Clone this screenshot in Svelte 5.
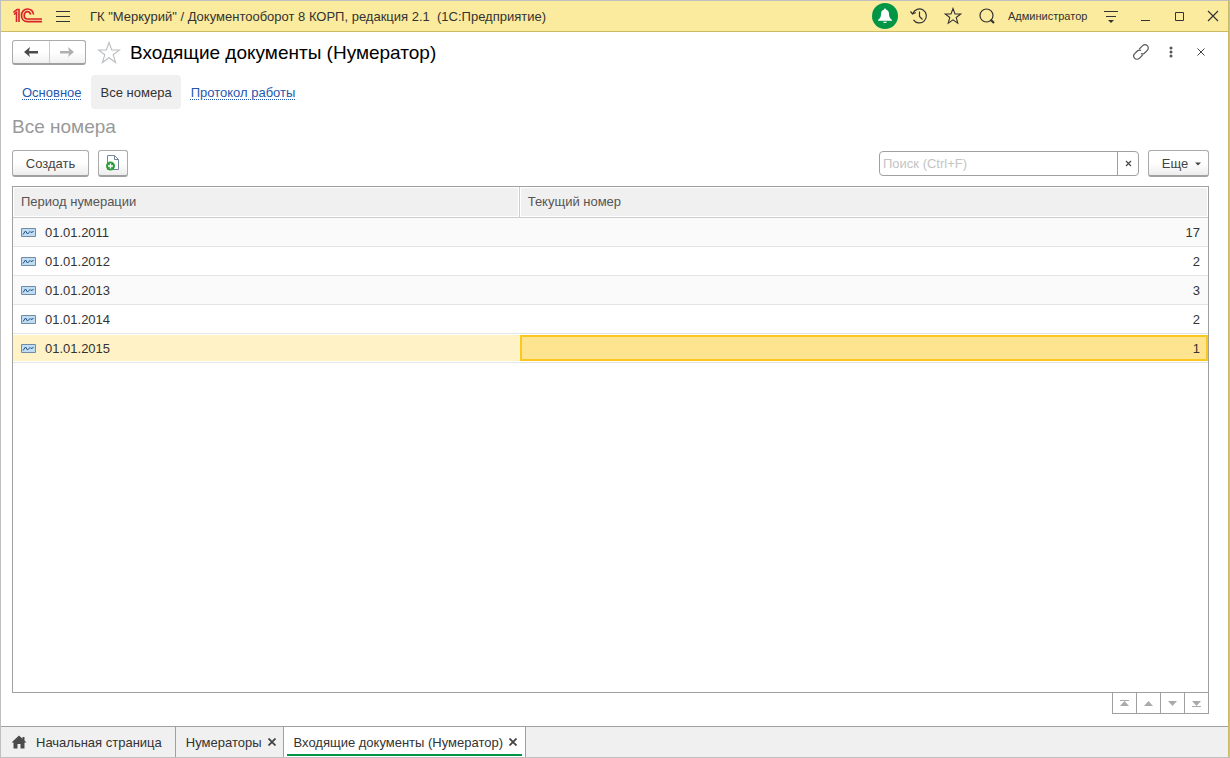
<script>
    let rows = $state([
        { period: '01.01.2011', number: 17 },
        { period: '01.01.2012', number: 2 },
        { period: '01.01.2013', number: 3 },
        { period: '01.01.2014', number: 2 },
        { period: '01.01.2015', number: 1 }
    ]);
    let selected = $state(4);
    let search = $state('');

    const pager = [
        { label: 'В начало', path: 'M1 1h9v1H1zM5.5 2L10 7H1z' },
        { label: 'Вверх', path: 'M5.5 2L10 7H1z' },
        { label: 'Вниз', path: 'M1 2h9L5.5 7z' },
        { label: 'В конец', path: 'M1 2h9L5.5 7zM1 7h9v1H1z' }
    ];
</script>

<div class="window">
    <header class="titlebar">
        <svg class="logo" width="30" height="16" viewBox="0 0 30 16" fill="none" stroke="#d8232a">
            <path d="M0.5 4.5L4 1.5H6V14M1 6.5L3.5 4.5V14" stroke-width="1.6" />
            <path d="M20.5 6.5C20 3 17.5 1 14.5 1C11 1 8.5 4 8.5 7.5C8.5 11 11 13.7 14.5 13.7H29" stroke-width="1.7" />
            <path d="M17.7 6.5C17 4.5 16 3.7 14.5 3.7C12.5 3.7 11.2 5.5 11.2 7.5C11.2 9.5 12.5 11 14.5 11H29" stroke-width="1.7" />
        </svg>
        <button class="icon menu" aria-label="Меню">
            <svg width="14" height="13" viewBox="0 0 14 13" stroke="#333"><path d="M0 1.5h14M0 6.5h14M0 11.5h14" /></svg>
        </button>
        <span class="app-name">ГК "Меркурий" / Документооборот 8 КОРП, редакция 2.1&nbsp; (1С:Предприятие)</span>
        <div class="tools">
            <button class="icon bell" aria-label="Уведомления">
                <svg width="16" height="16" viewBox="0 0 16 16" fill="#fff">
                    <path d="M8 0.5C8.8 0.5 9 1 9 1.6C11.2 2.2 12 4 12 6C12 9 13 10.5 15 12V12.8H1V12C3 10.5 4 9 4 6C4 4 4.8 2.2 7 1.6C7 1 7.2 0.5 8 0.5zM6 13.8h4C9.6 15.5 6.4 15.5 6 13.8z" />
                </svg>
            </button>
            <button class="icon" aria-label="История">
                <svg width="18" height="18" viewBox="0 0 18 18" fill="none" stroke="#333" stroke-width="1.2">
                    <path d="M2.8 6.5A7 7 0 1 1 3.5 12.8M9.5 4.5V9.5L12.5 12.5" />
                    <path d="M0.5 4.5L2.6 7L5.8 5.5" />
                </svg>
            </button>
            <button class="icon" aria-label="Избранное">
                <svg width="18" height="18" viewBox="0 0 18 18" fill="none" stroke="#333" stroke-width="1.1">
                    <path d="M9 1.5L11 7H16.7L12.2 10.5L13.8 16.2L9 12.9L4.2 16.2L5.8 10.5L1.3 7H7z" />
                </svg>
            </button>
            <button class="icon" aria-label="Поиск">
                <svg width="18" height="18" viewBox="0 0 18 18" fill="none" stroke="#333">
                    <circle cx="8.5" cy="8.5" r="6.5" stroke-width="1.2" />
                    <path d="M12.5 12.5L16 16" stroke-width="2.2" />
                </svg>
            </button>
            <a class="user" href="#user">Администратор</a>
            <button class="icon" aria-label="Настройки">
                <svg width="14" height="14" viewBox="0 0 14 14" stroke="#333">
                    <path d="M0 2.5h14M2 7.5h10" /><path d="M4 11h6L7 14z" fill="#333" stroke="none" />
                </svg>
            </button>
            <button class="icon" aria-label="Свернуть">
                <svg width="12" height="12" viewBox="0 0 12 12" stroke="#333"><path d="M2 10.5h9" /></svg>
            </button>
            <button class="icon" aria-label="Развернуть">
                <svg width="12" height="12" viewBox="0 0 12 12" fill="none" stroke="#333"><path d="M2.5 2.5h8v8h-8z" /></svg>
            </button>
            <button class="icon" aria-label="Закрыть">
                <svg width="12" height="12" viewBox="0 0 12 12" stroke="#333" stroke-width="1.2"><path d="M1 1L11 11M11 1L1 11" /></svg>
            </button>
        </div>
    </header>

    <main>
        <div class="heading">
            <div class="history">
                <button aria-label="Назад">
                    <svg width="16" height="12" viewBox="0 0 16 12" fill="#4a4a4a"><path d="M1 6L7 1L6 5H15V7.5H6L7 11z" /></svg>
                </button>
                <button aria-label="Вперед">
                    <svg width="16" height="12" viewBox="0 0 16 12" fill="#b0b0b0"><path d="M15 6L9 1L10 5H1V7.5H10L9 11z" /></svg>
                </button>
            </div>
            <button class="icon favourite" aria-label="Добавить в избранное">
                <svg width="24" height="24" viewBox="0 0 24 24" fill="none" stroke="#b9bdc2" stroke-width="1.1">
                    <path d="M12 1.5L14.7 9H22.5L16.2 13.7L18.6 21.5L12 16.8L5.4 21.5L7.8 13.7L1.5 9H9.3z" />
                </svg>
            </button>
            <h1>Входящие документы (Нумератор)</h1>
            <div class="form-tools">
                <button class="icon" aria-label="Ссылка">
                    <svg width="18" height="18" viewBox="0 0 18 18" fill="none" stroke="#555" stroke-width="1.2">
                        <path d="M7.2 6.2L10.7 2.7A3.2 3.2 0 0 1 15.3 7.3L12.4 10.2Q10.8 11.5 9 10.6" />
                        <path d="M10.8 11.8L7.3 15.3A3.2 3.2 0 0 1 2.7 10.7L5.6 7.8Q7.2 6.5 9 7.4" />
                    </svg>
                </button>
                <button class="icon" aria-label="Еще действия">
                    <svg width="4" height="12" viewBox="0 0 4 12" fill="#555"><circle cx="2" cy="2" r="1.5" /><circle cx="2" cy="6" r="1.5" /><circle cx="2" cy="10" r="1.5" /></svg>
                </button>
                <button class="icon" aria-label="Закрыть форму">
                    <svg width="8" height="8" viewBox="0 0 8 8" stroke="#444"><path d="M0.5 0.5L7.5 7.5M7.5 0.5L0.5 7.5" /></svg>
                </button>
            </div>
        </div>

        <nav>
            <a href="#main">Основное</a>
            <a class="current" href="#numbers">Все номера</a>
            <a href="#log">Протокол работы</a>
        </nav>

        <h2>Все номера</h2>

        <div class="commands">
            <button class="button create">Создать</button>
            <button class="button copy" aria-label="Создать копированием">
                <svg width="16" height="16" viewBox="0 0 16 16">
                    <path d="M2.5 0.5H9.5L13.5 4.5V14.5H2.5z" fill="#fff" stroke="#71859b" />
                    <path d="M9.5 0.5V4.5H13.5" fill="none" stroke="#71859b" />
                    <circle cx="5.5" cy="11" r="4.5" fill="#2e9e3c" />
                    <path d="M5.5 8.5v5M3 11h5" stroke="#fff" stroke-width="1.4" />
                </svg>
            </button>
            <div class="search">
                <input type="text" placeholder="Поиск (Ctrl+F)" aria-label="Поиск" bind:value={search}>
                <button aria-label="Очистить" onclick={() => search = ''}>
                    <svg width="7" height="7" viewBox="0 0 7 7" stroke="#444" stroke-width="1.1"><path d="M1 1L6 6M6 1L1 6" /></svg>
                </button>
            </div>
            <button class="button more">
                Еще
                <svg width="6" height="4" viewBox="0 0 6 4" fill="#444"><path d="M0 0.5h6L3 3.5z" /></svg>
            </button>
        </div>

        <div class="list">
            <table>
                <thead>
                    <tr>
                        <th class="period">Период нумерации</th>
                        <th>Текущий номер</th>
                    </tr>
                </thead>
                <tbody>
                    {#each rows as row, i}
                        <tr class:selected={i === selected} onclick={() => selected = i}>
                            <td>
                                <div class="cell">
                                    <svg width="15" height="9" viewBox="0 0 15 9" fill="none">
                                        <path d="M0.5 0.5h14v8h-14z" fill="#bfdcf3" stroke="#6f8ba6" />
                                        <path d="M2 6.5L4.5 3L6.5 6L9 3.5L10 4.5L12.5 3.5" stroke="#1d4f86" />
                                    </svg>
                                    {row.period}
                                </div>
                            </td>
                            <td><div class="cell number">{row.number}</div></td>
                        </tr>
                    {/each}
                </tbody>
            </table>
        </div>
        <div class="pager">
            {#each pager as item}
                <button aria-label={item.label}>
                    <svg width="11" height="9" viewBox="0 0 11 9" fill="#aaa"><path d={item.path} /></svg>
                </button>
            {/each}
        </div>
    </main>

    <footer>
        <div class="tab home">
            <svg width="16" height="14" viewBox="0 0 16 14" fill="#4a4a4a"><path d="M8 0.5L11.5 3.7V2H13.5V5.5L15.5 7.5H13.5V13.5H9.5V9H6.5V13.5H2.5V7.5H0.5z" /></svg>
            <a href="#home">Начальная страница</a>
        </div>
        <div class="tab">
            <a href="#numerators">Нумераторы</a>
            <button class="close" aria-label="Закрыть Нумераторы">
                <svg width="8" height="8" viewBox="0 0 8 8" stroke="#444" stroke-width="1.8"><path d="M0.5 0.5L7.5 7.5M7.5 0.5L0.5 7.5" /></svg>
            </button>
        </div>
        <div class="tab active">
            <a href="#incoming">Входящие документы (Нумератор)</a>
            <button class="close" aria-label="Закрыть Входящие документы">
                <svg width="8" height="8" viewBox="0 0 8 8" stroke="#444" stroke-width="1.8"><path d="M0.5 0.5L7.5 7.5M7.5 0.5L0.5 7.5" /></svg>
            </button>
        </div>
    </footer>
</div>

<style>
    :global(body) {
        margin: 0;
        background: #fff;
    }
    * {
        box-sizing: border-box;
    }
    .window {
        display: flex;
        flex-direction: column;
        min-height: 100vh;
        border: 1px solid #bfbfbf;
        box-shadow: inset -1px 0 #cdbb62;
        padding-right: 1px;
        font-family: "Liberation Sans", Arial, sans-serif;
        font-size: 13px;
        line-height: 17px;
        color: #333;
    }
    button, input {
        font: inherit;
        color: inherit;
    }
    button {
        display: flex;
        align-items: center;
        justify-content: center;
        padding: 0;
        border: none;
        background: none;
    }
    svg {
        display: block;
        flex: none;
    }
    a {
        color: inherit;
        text-decoration: none;
    }
    .icon {
        width: 26px;
        height: 26px;
    }
    .titlebar {
        display: flex;
        align-items: center;
        height: 31px;
        padding: 0 2px 0 12px;
        background: #fbeb9e;
        border-bottom: 1px solid #cdbb62;
    }
    .menu {
        margin-left: 7px;
    }
    .app-name {
        margin-left: 14px;
        white-space: nowrap;
    }
    .tools {
        display: flex;
        align-items: center;
        gap: 8px;
        margin-left: auto;
    }
    .bell {
        border-radius: 50%;
        background: #009646;
    }
    .user {
        min-width: 82px;
        font-size: 11px;
    }
    main {
        display: flex;
        flex-direction: column;
        flex: 1;
        padding: 8px 19px 12px 11px;
    }
    .heading {
        display: flex;
        align-items: center;
        height: 25px;
    }
    .history {
        display: flex;
        width: 74px;
        height: 25px;
        border: 1px solid #ababab;
        border-bottom: 2px solid #a0a0a0;
        border-radius: 3px;
        background: linear-gradient(#fff 50%, #f0f0f0);
    }
    .history button {
        flex: 1;
    }
    .history button + button {
        border-left: 1px solid #ccc;
    }
    .favourite {
        margin-left: 10px;
    }
    h1 {
        margin: 0 0 0 8px;
        font-size: 19px;
        line-height: 24px;
        font-weight: normal;
        color: #000;
    }
    .form-tools {
        display: flex;
        gap: 4px;
        margin-left: auto;
        margin-right: -5px;
        padding-bottom: 2px;
    }
    nav {
        display: flex;
        gap: 10px;
        height: 34px;
        margin-top: 10px;
        padding-left: 10px;
    }
    nav a {
        line-height: 35px;
        color: #1f57b0;
        text-decoration: underline dotted 1px;
        text-underline-offset: 2px;
    }
    nav .current {
        margin-left: -1px;
        padding: 0 9px 0 10px;
        border-radius: 4px;
        background: #f0f0f0;
        color: #333;
        text-decoration: none;
    }
    h2 {
        margin: 6px 0 0;
        font-size: 19px;
        line-height: 24px;
        font-weight: normal;
        color: #999;
    }
    .commands {
        display: flex;
        align-items: center;
        margin: 11px 0 9px;
    }
    .button {
        height: 27px;
        border: 1px solid #ababab;
        border-bottom: 2px solid #a0a0a0;
        border-radius: 3px;
        background: linear-gradient(#fff 50%, #ededed);
        color: #444;
    }
    .create {
        width: 77px;
        padding-top: 1px;
    }
    .copy {
        width: 30px;
        margin-left: 9px;
    }
    .search {
        display: flex;
        width: 260px;
        height: 25px;
        margin-left: auto;
        border: 1px solid #a0a0a0;
        border-radius: 4px;
    }
    .search input {
        flex: 1;
        min-width: 0;
        padding: 0 3px;
        border: none;
        outline: none;
        background: none;
    }
    .search input::placeholder {
        color: #c4c4c4;
    }
    .search button {
        width: 21px;
        border-left: 1px solid #a0a0a0;
    }
    .more {
        gap: 7px;
        width: 61px;
        margin-left: 9px;
        padding: 1px 0 0 6px;
    }
    .list {
        flex: 1;
        border: 1px solid #a0a0a0;
    }
    table {
        width: 100%;
        table-layout: fixed;
        border-collapse: separate;
        border-spacing: 0;
    }
    th {
        height: 31px;
        padding: 0 8px;
        border-bottom: 1px solid #ccc;
        box-shadow: inset 0 0 0 1px #fff;
        background: #f0f0f0;
        font-weight: normal;
        line-height: 16px;
        text-align: left;
        color: #555;
    }
    .period {
        width: 42.4%;
        border-right: 1px solid #ccc;
    }
    td {
        height: 29px;
        padding: 1px 0;
        border-bottom: 1px solid #e4e4e4;
    }
    tbody tr:nth-child(odd) {
        background: #fafafa;
    }
    tbody tr.selected {
        background: #fff;
    }
    .cell {
        display: flex;
        align-items: center;
        gap: 9px;
        height: 26px;
        padding: 0 8px;
    }
    .number {
        justify-content: flex-end;
    }
    .selected .cell {
        background: #fef2c6;
    }
    .selected .number {
        padding: 0 6px;
        border: 2px solid #fac81e;
        background: #fee48f;
    }
    .pager {
        display: flex;
        align-self: flex-end;
        border: 1px solid #a0a0a0;
        border-top: none;
    }
    .pager button {
        width: 24px;
        height: 20px;
    }
    .pager button:first-child {
        width: 23px;
    }
    .pager button + button {
        border-left: 1px solid #a0a0a0;
    }
    footer {
        display: flex;
        height: 31px;
        border-top: 1px solid #a0a0a0;
        background: #f0f0f0;
    }
    .tab {
        display: flex;
        align-items: center;
        gap: 6px;
        padding: 0 7px 0 10px;
        border-right: 1px solid #a0a0a0;
        white-space: nowrap;
    }
    .home {
        gap: 9px;
        padding-right: 13px;
    }
    .active {
        padding-right: 8px;
        background: linear-gradient(#009646, #009646) center bottom 1px / calc(100% - 6px) 2px no-repeat #fff;
    }
</style>
